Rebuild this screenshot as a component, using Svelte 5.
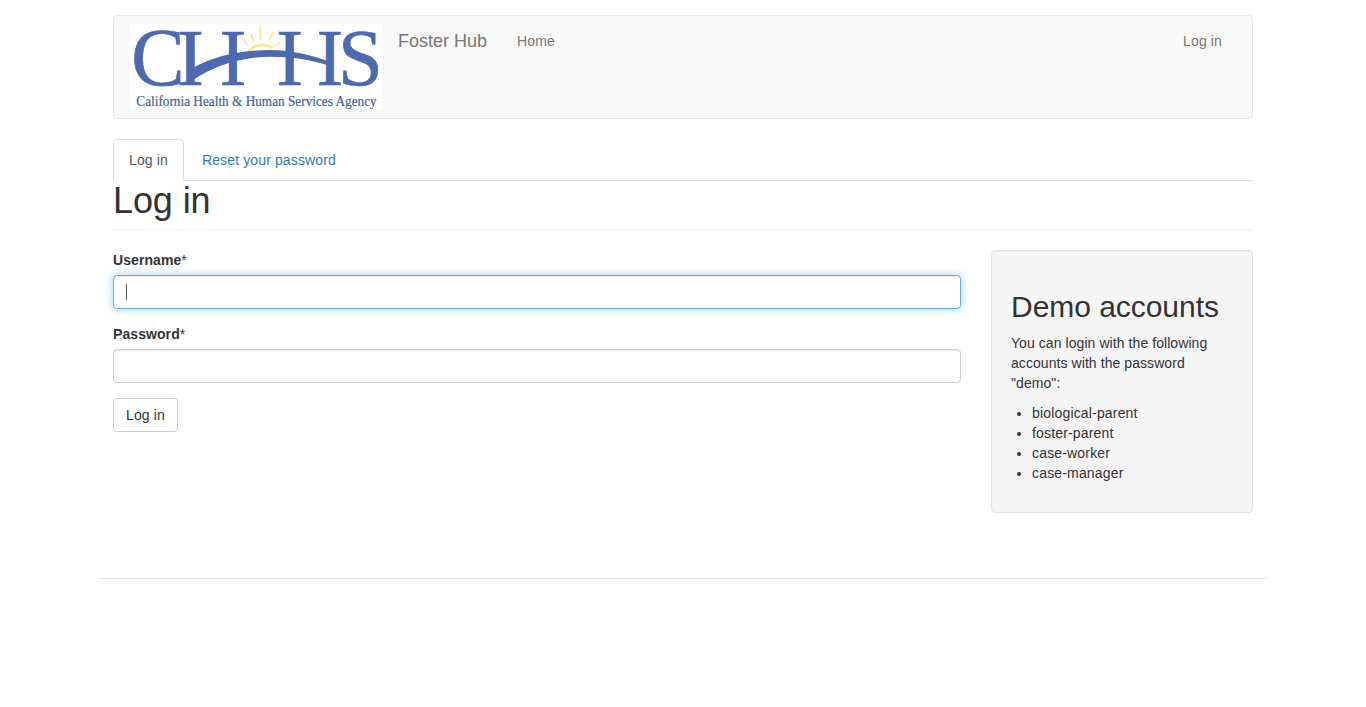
<script>
  const accounts = ['biological-parent', 'foster-parent', 'case-worker', 'case-manager'];
  let username = $state('');
  let password = $state('');
</script>

<div class="container">
  <header class="navbar">
    <a class="logo" href="#home" aria-label="Home">
      <svg width="254" height="86" viewBox="57 42 762 258">
        <rect x="57" y="42" width="762" height="258" fill="#fff" />
        <g fill="none" stroke="#f8e998" stroke-width="5" stroke-linecap="round">
          <path d="M391 79L411 103M423 72L431 91M451 46V88M488 68L479 89M509 98L493 107" />
          <path d="M418 121Q449 93 486 112" stroke-width="8" />
        </g>
        <g class="initials">
          <text x="64" y="224" font-size="246" textLength="160" lengthAdjust="spacingAndGlyphs">C</text>
          <text x="241" y="224" text-anchor="middle">I</text>
          <text x="369" y="224" text-anchor="middle">I</text>
          <text x="539" y="224" text-anchor="middle">I</text>
          <text x="660" y="224" text-anchor="middle">I</text>
          <text x="684" y="224">S</text>
        </g>
        <path fill="#4d69b0" d="M248 174C310 137 400 120 480 120C548 121 606 136 660 156V168C602 149 548 140 480 140C395 141 310 167 248 211Z" />
        <text class="agency" x="79" y="287" textLength="721" lengthAdjust="spacingAndGlyphs">California Health &amp; Human Services Agency</text>
      </svg>
    </a>
    <a class="brand" href="#home">Foster Hub</a>
    <nav><a href="#home">Home</a><a href="#login">Log in</a></nav>
  </header>

  <ul class="tabs">
    <li><a class="active" href="#login">Log in</a></li>
    <li><a href="#reset">Reset your password</a></li>
  </ul>
  <h1>Log in</h1>

  <div class="row">
    <form onsubmit={(e) => e.preventDefault()}>
      <div class="group">
        <label for="user">Username<span>*</span></label>
        <div class="field">
          <input id="user" class="focused" type="text" bind:value={username} />
          {#if !username}<i class="caret"></i>{/if}
        </div>
      </div>
      <div class="group">
        <label for="pass">Password<span>*</span></label>
        <div class="field"><input id="pass" type="password" bind:value={password} /></div>
      </div>
      <button type="submit">Log in</button>
    </form>
    <aside>
      <h2>Demo accounts</h2>
      <p>You can login with the following accounts with the password "demo":</p>
      <ul>
        {#each accounts as account}<li>{account}</li>{/each}
      </ul>
    </aside>
  </div>
</div>
<footer></footer>

<style>
  :global(body) {
    margin: 0;
    padding-top: 15px;
    background: #fff;
    color: #333;
    font: 14px/20px "Liberation Sans", Arial, sans-serif;
  }
  .container, .container *, footer { box-sizing: border-box; }
  .container { width: 1140px; margin: 0 auto; }
  a { color: #337ab7; text-decoration: none; }
  nav a, .tabs a { letter-spacing: .13px; }
  .navbar {
    display: flex;
    align-items: flex-start;
    height: 104px;
    padding: 0 15px;
    margin-bottom: 20px;
    border: 1px solid #e7e7e7;
    border-radius: 4px;
    background: #f8f8f8;
  }
  .logo { margin: 8px 15px 0 0; }
  .logo svg { display: block; overflow: visible; }
  .initials { fill: #4d69b0; stroke: #4d69b0; stroke-width: 2; font-family: "Liberation Serif", serif; font-size: 242px; }
  .agency { fill: #465f9f; stroke: #465f9f; stroke-width: .6; font-family: "Liberation Serif", serif; font-size: 41px; }
  .brand { padding: 15px 15px 0 0; color: #777; font-size: 18px; }
  nav { display: flex; flex: 1; justify-content: space-between; }
  nav a { padding: 15px; color: #777; }
  .tabs { display: flex; gap: 2px; margin: 0; padding: 0; height: 42px; list-style: none; border-bottom: 1px solid #ddd; }
  .tabs a { display: block; height: 42px; padding: 10px 15px; border: 1px solid transparent; border-radius: 4px 4px 0 0; }
  .tabs .active { color: #555; background: #fff; border-color: #ddd; border-bottom-color: #fff; }
  h1, h2 { font-weight: 400; line-height: 1.1; }
  h1 { height: 49px; margin: 0 0 20px; padding-bottom: 9px; border-bottom: 1px solid #eee; font-size: 36px; letter-spacing: -.1px; }
  .row { display: flex; align-items: flex-start; gap: 30px; }
  form { width: 848px; }
  .group { margin-bottom: 15px; }
  label { display: block; margin-bottom: 5px; font-weight: 700; letter-spacing: .08px; }
  label span { font-weight: 400; }
  .field { position: relative; }
  input {
    display: block;
    width: 100%;
    height: 34px;
    padding: 6px 12px;
    border: 1px solid #ccc;
    border-radius: 4px;
    outline: 0;
    background: #fff;
    color: #555;
    font: inherit;
    box-shadow: inset 0 1px 1px rgba(0, 0, 0, .075);
  }
  .focused { border-color: #66afe9; box-shadow: inset 0 1px 1px rgba(0, 0, 0, .075), 0 0 8px rgba(102, 175, 233, .6); }
  .caret { position: absolute; left: 13px; top: 9px; width: 1px; height: 16px; background: #555; }
  button { display: block; height: 34px; padding: 6px 12px; border: 1px solid #ccc; border-radius: 4px; background: #fff; color: #333; font: inherit; letter-spacing: .14px; }
  aside {
    width: 262px;
    padding: 19px;
    border: 1px solid #e3e3e3;
    border-radius: 4px;
    background: #f5f5f5;
    box-shadow: inset 0 1px 1px rgba(0, 0, 0, .05);
  }
  h2 { margin: 20px 0 10px; font-size: 30px; letter-spacing: -.04px; }
  p { margin: 0 0 10px; letter-spacing: .07px; }
  aside ul { margin: 0 0 10px; padding-left: 21px; letter-spacing: .17px; }
  footer { width: 1170px; margin: 65px auto 0; border-top: 1px solid #e5e5e5; }
</style>
